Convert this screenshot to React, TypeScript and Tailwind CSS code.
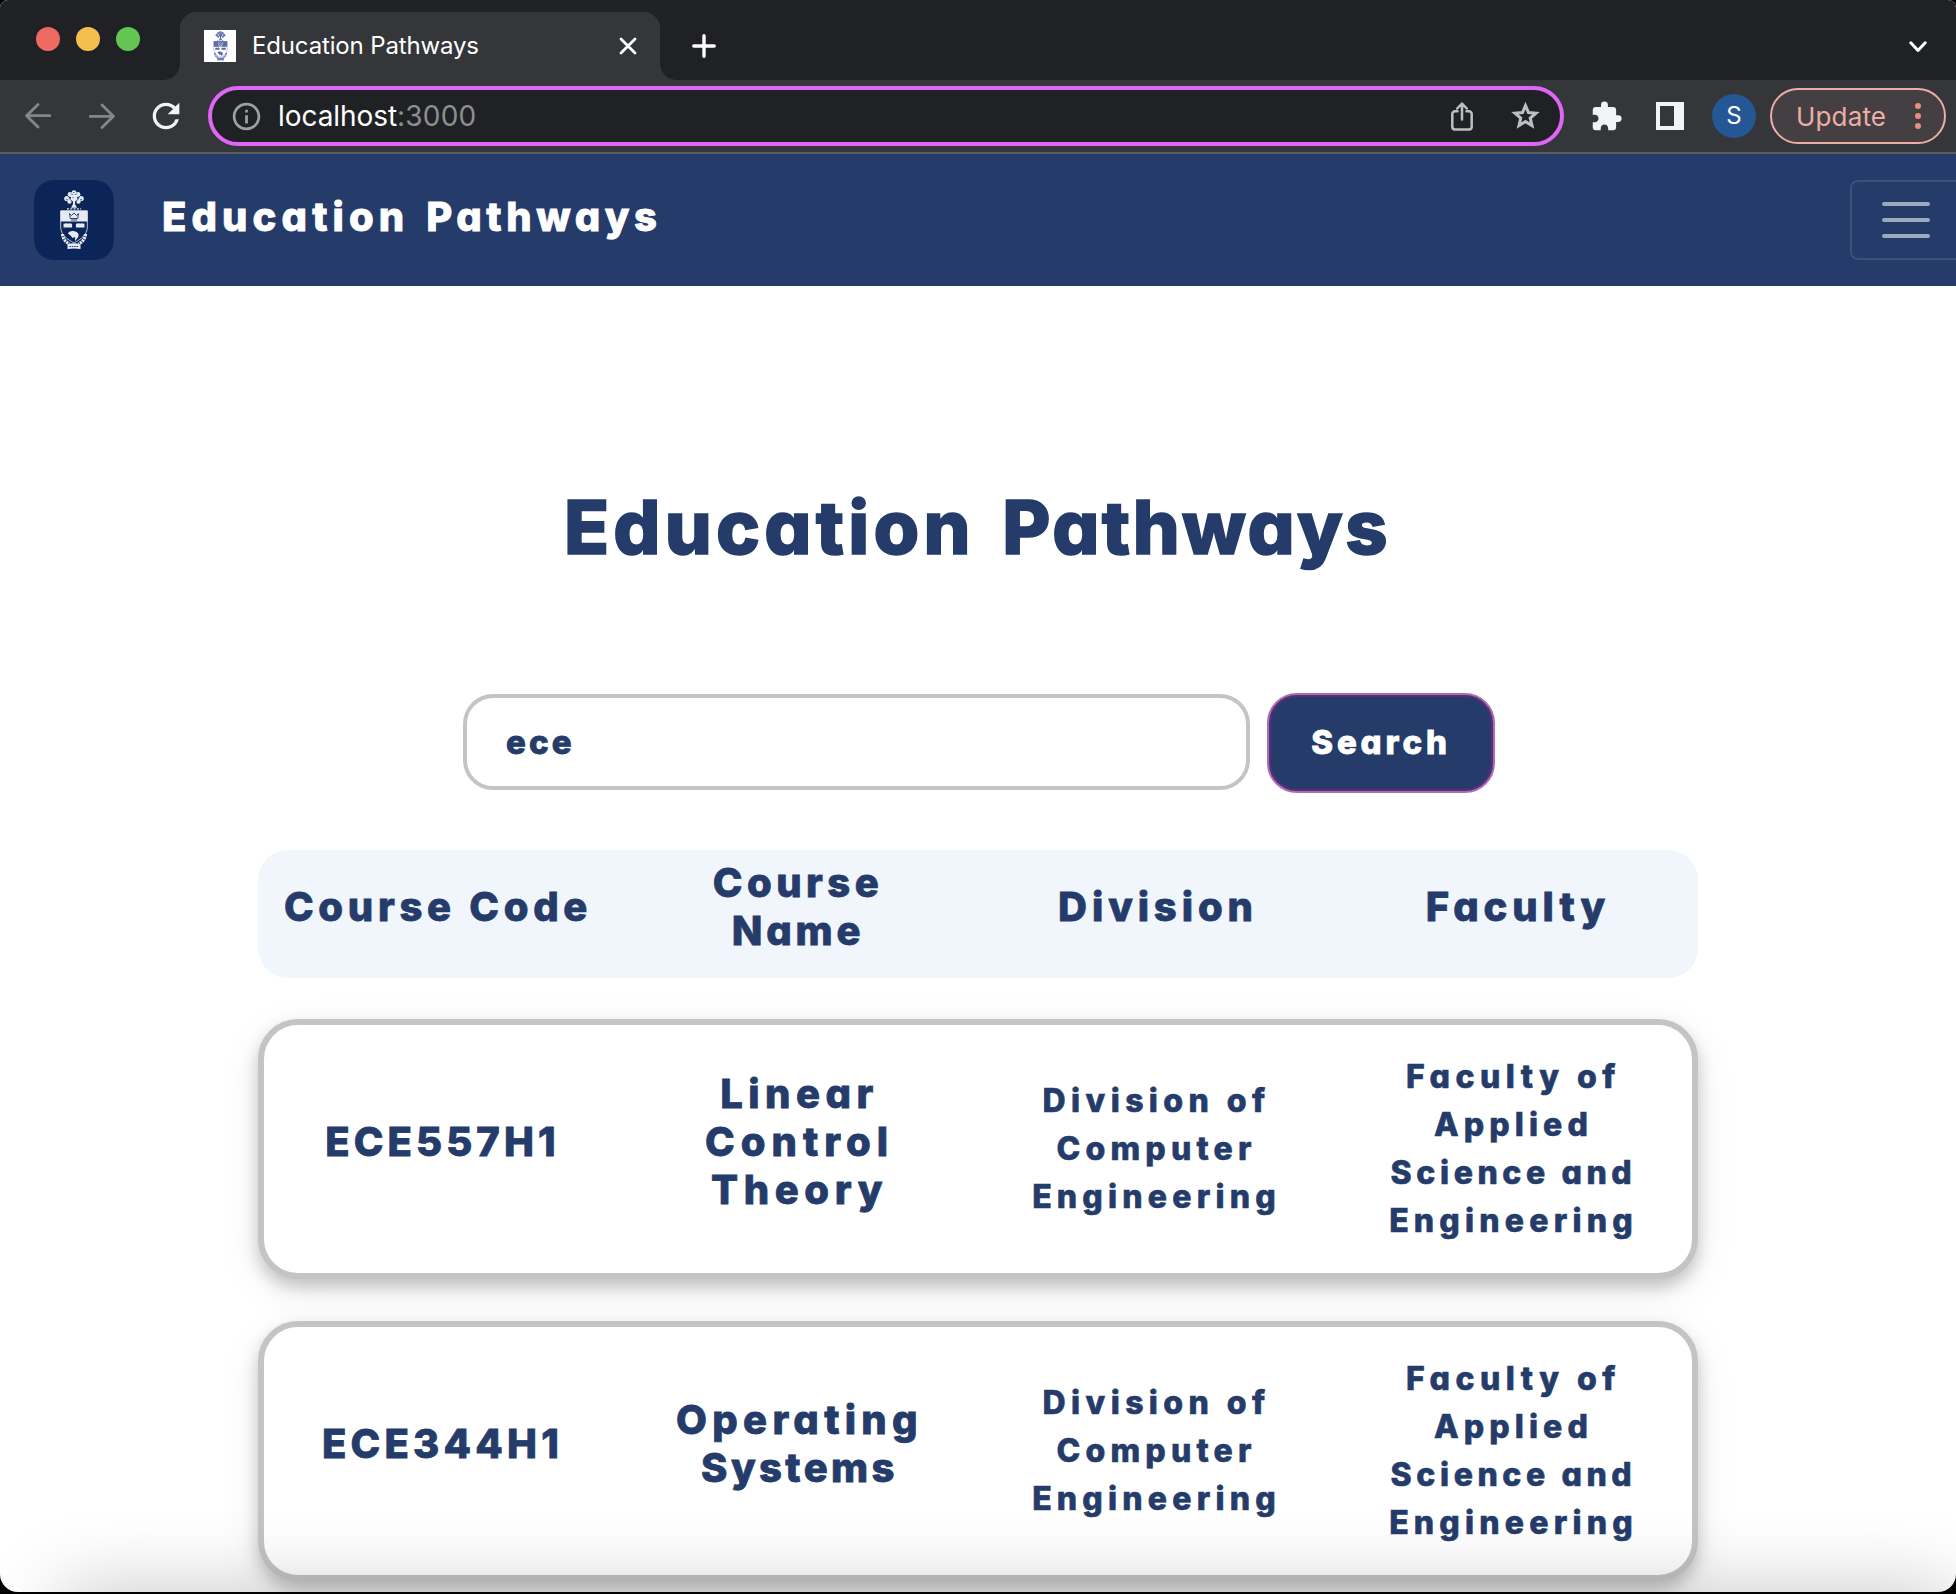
import { MdExtension, MdInfoOutline, MdRefresh } from "react-icons/md";

type Line = { text: string; spacing: string };

const HEADERS: Line[][] = [
  [{ text: "Course Code", spacing: "tracking-[4.7px]" }],
  [
    { text: "Course", spacing: "tracking-[4.45px]" },
    { text: "Name", spacing: "tracking-[3.8px]" },
  ],
  [{ text: "Division", spacing: "tracking-[4.9px]" }],
  [{ text: "Faculty", spacing: "tracking-[4.9px]" }],
];

const COURSES: { code: Line; name: Line[] }[] = [
  {
    code: { text: "ECE557H1", spacing: "tracking-[4.1px]" },
    name: [
      { text: "Linear", spacing: "tracking-[5.5px]" },
      { text: "Control", spacing: "tracking-[6px]" },
      { text: "Theory", spacing: "tracking-[5.6px]" },
    ],
  },
  {
    code: { text: "ECE344H1", spacing: "tracking-[4.2px]" },
    name: [
      { text: "Operating", spacing: "tracking-[5.3px]" },
      { text: "Systems", spacing: "tracking-[3.4px]" },
    ],
  },
];

const DIVISION: Line[] = [
  { text: "Division of", spacing: "tracking-[5.4px]" },
  { text: "Computer", spacing: "tracking-[5.2px]" },
  { text: "Engineering", spacing: "tracking-[5.2px]" },
];

const FACULTY: Line[] = [
  { text: "Faculty of", spacing: "tracking-[5.5px]" },
  { text: "Applied", spacing: "tracking-[5.1px]" },
  { text: "Science and", spacing: "tracking-[4.6px]" },
  { text: "Engineering", spacing: "tracking-[5.2px]" },
];

function Large({ lines }: { lines: Line[] }) {
  return (
    <div className="flex flex-col items-center pb-3.5 text-[40px] leading-[48px]">
      {lines.map((l) => (
        <span key={l.text} className={`whitespace-nowrap ${l.spacing}`}>{l.text}</span>
      ))}
    </div>
  );
}

function Small({ lines }: { lines: Line[] }) {
  return (
    <div className="flex flex-col items-center text-[32px] leading-[48px] [-webkit-text-stroke:0.600px_currentColor]">
      {lines.map((l) => (
        <span key={l.text} className={`whitespace-nowrap ${l.spacing}`}>{l.text}</span>
      ))}
    </div>
  );
}

function Crest({ className, ink, field }: { className: string; ink: string; field: string }) {
  return (
    <svg viewBox="0 0 28 60" className={className}>
      <g fill={ink}>
        <circle cx="14" cy="2.600" r="2.400" />
        <circle cx="10" cy="4.500" r="2.400" />
        <circle cx="18" cy="4.500" r="2.400" />
        <circle cx="6.800" cy="8.500" r="2.600" />
        <circle cx="21.200" cy="8.500" r="2.600" />
        <circle cx="14" cy="8" r="3.400" />
        <circle cx="9.500" cy="11.500" r="2.200" />
        <circle cx="18.500" cy="11.500" r="2.200" />
        <path d="M13 9h2v5l2 3.800h-6L13 14z" />
      </g>
      <g stroke={field} strokeWidth="0.7" fill="none">
        <path d="M11 3.500l1.500 1.500M17 3.500l-1.500 1.500M8 6.500l2.500 1.500M20 6.500l-2.500 1.500M10.500 10.500l2 1M17.500 10.500l-2 1M6 9.500l2 .5M22 9.500l-2 .5M13 2.500h1.500M12.500 7l1 1" />
      </g>
      <path d="M7 18.800h14" stroke={ink} strokeWidth="1.300" strokeDasharray="2 1.300" />
      <path d="M.7 21h26.600v16c0 8-6.300 12-13.300 16C7 49 .7 45 .7 37z" fill={field} stroke={ink} strokeWidth="0.800" />
      <path d="M.5 20.500h27v11H.5z" fill={ink} />
      <path d="M9.500 23.500l2 2L14 23l2.500 2.500 2-2-.8 5h-7.400zM11 30h6" fill="none" stroke={field} strokeWidth="1" opacity="0.850" />
      <path d="M3.500 33.800q3.800-1.200 4.300 0q.5-1.200 4.300 0v3.700H3.500zM15.900 33.800q3.800-1.200 4.300 0q.5-1.200 4.300 0v3.700h-8.600z" fill={ink} />
      <path d="M8 43.500c1.200-2.500 4.800-3 7-2 3 .6 4.300 3 3.300 5.500l-3.300 4 .2-4-2.700 1-1.500-2z" fill={ink} />
      <path d="M2.500 44q.5 6.500 7 10M25.500 44q-.5 6.500-7 10" fill="none" stroke={ink} strokeWidth="3.200" strokeDasharray="2.200 .8" />
      <path d="M7.500 54q6.500-1.500 13 0v5q-6.500-1-13 0z" fill={ink} />
      <path d="M9.500 56.500h9" stroke={field} strokeWidth="0.900" strokeDasharray="1.500 .8" />
    </svg>
  );
}

function Arrow({ flip }: { flip?: boolean }) {
  return (
    <svg viewBox="0 0 26 26" className={`h-[26px] w-[26px] shrink-0 ${flip ? "rotate-180" : ""}`} fill="none" stroke="#85868a" strokeWidth="2.8" strokeLinecap="round" strokeLinejoin="round">
      <path d="M24.800 12.700H1.800M13 1.500L1.600 12.700 13 24" />
    </svg>
  );
}

function TabStrip() {
  return (
    <div className="flex h-20 shrink-0 bg-[#202124]">
      <div className="flex w-40 shrink-0 items-start gap-4 pl-9 pt-[27px]">
        <span className="size-6 shrink-0 rounded-full bg-[#ed6a5f]" />
        <span className="size-6 shrink-0 rounded-full bg-[#f5bf4f]" />
        <span className="size-6 shrink-0 rounded-full bg-[#62c554]" />
      </div>
      <div className="flex w-5 shrink-0 items-end justify-end">
        <span className="size-4 bg-[radial-gradient(circle_at_top_left,transparent_15.500px,#35363a_16px)]" />
      </div>
      <div className="mt-3 flex w-[480px] shrink-0 items-center rounded-t-2xl bg-[#35363a] pl-6">
        <span className="flex size-8 items-center justify-center bg-white">
          <Crest className="h-[30px] w-[19px]" ink="#5a69ab" field="#ffffff" />
        </span>
        <span className="ml-4 whitespace-nowrap text-[24px] leading-8 tracking-[-0.15px] text-white">Education Pathways</span>
        <svg viewBox="0 0 18 18" className="ml-auto mr-[23px] size-[18px]" stroke="#ffffff" strokeWidth="2.800" strokeLinecap="round">
          <path d="M2 2l14 14M16 2L2 16" />
        </svg>
      </div>
      <div className="flex shrink-0 items-end">
        <span className="size-4 bg-[radial-gradient(circle_at_top_right,transparent_15.500px,#35363a_16px)]" />
      </div>
      <svg viewBox="0 0 24 24" className="ml-4 mt-[34px] size-6" stroke="#ffffff" strokeWidth="3.400" strokeLinecap="round">
        <path d="M12 1.800v20.400M1.800 12h20.400" />
      </svg>
      <svg viewBox="0 0 18 12" className="ml-auto mr-[29px] mt-[41px] h-3 w-[18px]" fill="none" stroke="#ffffff" strokeWidth="3" strokeLinecap="round" strokeLinejoin="round">
        <path d="M1.800 1.800L9 9.500l7.200-7.700" />
      </svg>
    </div>
  );
}

function Toolbar() {
  return (
    <div className="flex h-[74px] shrink-0 items-center border-b-2 border-[#5c5c60] bg-[#35363a] pl-[25px]">
      <Arrow />
      <span className="ml-[38px] flex"><Arrow flip /></span>
      <MdRefresh className="ml-[31px] size-10 shrink-0 text-[#f1f3f4]" />
      <div className="ml-[22px] flex h-[60px] w-[1356px] shrink-0 items-center rounded-full border-4 border-[#e066f5] bg-[#202124] pl-[18px] pr-[17px]">
        <MdInfoOutline className="size-[33px] text-[#9aa0a6]" />
        <span className="ml-[15px] text-[28px] leading-9 tracking-[-0.06px] text-white">
          localhost<span className="tracking-[0.2px] text-[#8d8e90]">:3000</span>
        </span>
        <svg viewBox="0 0 22 29" className="ml-auto h-[29px] w-[22px]" fill="none" stroke="#bdbec0" strokeWidth="2.500" strokeLinecap="round" strokeLinejoin="round">
          <path d="M6.500 9.300H4a2.700 2.700 0 0 0-2.700 2.700v12.800A2.700 2.700 0 0 0 4 27.500h14a2.700 2.700 0 0 0 2.700-2.700V12A2.700 2.700 0 0 0 18 9.300h-2.500M11 17.500V2M6.200 6.500L11 1.600l4.800 4.900" />
        </svg>
        <svg viewBox="0 0 24 24" className="ml-[35px] size-[35px]" fill="none" stroke="#bdbec0" strokeWidth="2.100" strokeMiterlimit="10">
          <path d="M12 4.500l2.020 4.780 5.180.45-3.930 3.400 1.180 5.070L12 15.510l-4.450 2.690 1.180-5.070-3.930-3.400 5.180-.45z" />
        </svg>
      </div>
      <MdExtension className="ml-[26px] size-[33px] shrink-0 text-[#f1f3f4]" />
      <svg viewBox="0 0 28 28" className="ml-[33px] size-7 shrink-0" fill="#f1f3f4">
        <path fillRule="evenodd" d="M0 0h28v28H0zM4 4v20h14V4z" />
      </svg>
      <span className="ml-7 flex size-11 shrink-0 items-center justify-center rounded-full bg-[#235796] text-[24px] text-white">S</span>
      <div className="ml-3.5 flex h-14 w-44 shrink-0 items-center rounded-full border-2 border-[#eeada5] bg-[#443f42] pl-6 pr-[23px]">
        <span className="pt-0.5 text-[26px] leading-8 tracking-[0.15px] text-[#eeada5]">Update</span>
        <span className="ml-auto flex flex-col gap-1">
          <i className="size-1.5 rounded-full bg-[#e88e82]" />
          <i className="size-1.5 rounded-full bg-[#e88e82]" />
          <i className="size-1.5 rounded-full bg-[#e88e82]" />
        </span>
      </div>
    </div>
  );
}

export default function App() {
  return (
    <div className="h-[1594px] w-[1956px] overflow-hidden bg-black pb-0.5 font-['Inter',sans-serif]">
      <div className="relative flex h-[1592px] flex-col overflow-hidden rounded-b-[18px] rounded-t-[8px] bg-white">
        <TabStrip />
        <Toolbar />

        <div className="flex flex-1 flex-col overflow-hidden font-extrabold text-[#253c6a] [-webkit-text-stroke:0.800px_currentColor] [font-feature-settings:'cv11']">
          <nav className="flex h-[132px] shrink-0 items-center bg-[#253c6a] pl-[34px]">
            <span className="flex size-20 items-center justify-center rounded-[20px] bg-[#0b2558]">
              <Crest className="h-[60px] w-7" ink="#e6ebf3" field="#0b2558" />
            </span>
            <span className="mb-[7px] ml-[48px] whitespace-nowrap text-[40px] leading-[48px] tracking-[5.1px] text-white [word-spacing:3px]">
              Education <span className="tracking-[4.5px]">Pathways</span>
            </span>
            <span className="ml-auto flex h-20 w-[106px] shrink-0 flex-col justify-center gap-3 rounded-l-lg border-2 border-r-0 border-[#3b507a] pl-[30px]">
              <i className="h-1 w-12 rounded-full bg-[#9ea8bd]" />
              <i className="h-1 w-12 rounded-full bg-[#9ea8bd]" />
              <i className="h-1 w-12 rounded-full bg-[#9ea8bd]" />
            </span>
          </nav>

          <h1 className="mt-[196px] shrink-0 pr-0.5 text-center text-[74px] leading-[90px] tracking-[4.25px] [-webkit-text-stroke:1.500px_currentColor] [word-spacing:7px]">
            Education <span className="tracking-[2.4px]">Pathways</span>
          </h1>

          <div className="mt-[121px] flex shrink-0 items-center justify-center gap-[17px] pl-0.5">
            <input
              defaultValue="ece"
              className="mb-0.5 h-24 w-[787px] rounded-[30px] border-4 border-[#c4c4c4] bg-white pl-[39px] text-[33px] tracking-[3.100px] outline-none"
            />
            <button className="h-[100px] w-[228px] rounded-[30px] border-2 border-[#a96fb0] bg-[#253c6a] text-[33px] tracking-[3.9px] text-white inset-ring-2 inset-ring-[#5c2b79]">
              Search
            </button>
          </div>

          <div className="mx-[258px] mt-[57px] grid h-32 shrink-0 grid-cols-4 items-center rounded-[30px] bg-[#f1f5fc]">
            {HEADERS.map((h) => (
              <Large key={h[0].text} lines={h} />
            ))}
          </div>

          <div className="mx-[258px] mt-[41px] flex shrink-0 flex-col gap-[42px]">
            {COURSES.map((c) => (
              <div
                key={c.code.text}
                className="grid h-[260px] grid-cols-4 items-center rounded-[40px] border-6 border-[#c4c4c4] bg-white shadow-[0_8px_16px_rgba(0,0,0,0.2),0_12px_40px_rgba(0,0,0,0.08)]"
              >
                <Large lines={[c.code]} />
                <Large lines={c.name} />
                <Small lines={DIVISION} />
                <Small lines={FACULTY} />
              </div>
            ))}
          </div>
        </div>

        <div className="absolute -bottom-20 left-[60px] right-0 h-20 shadow-[0_0_80px_rgba(0,0,0,0.23)]" />
      </div>
    </div>
  );
}
